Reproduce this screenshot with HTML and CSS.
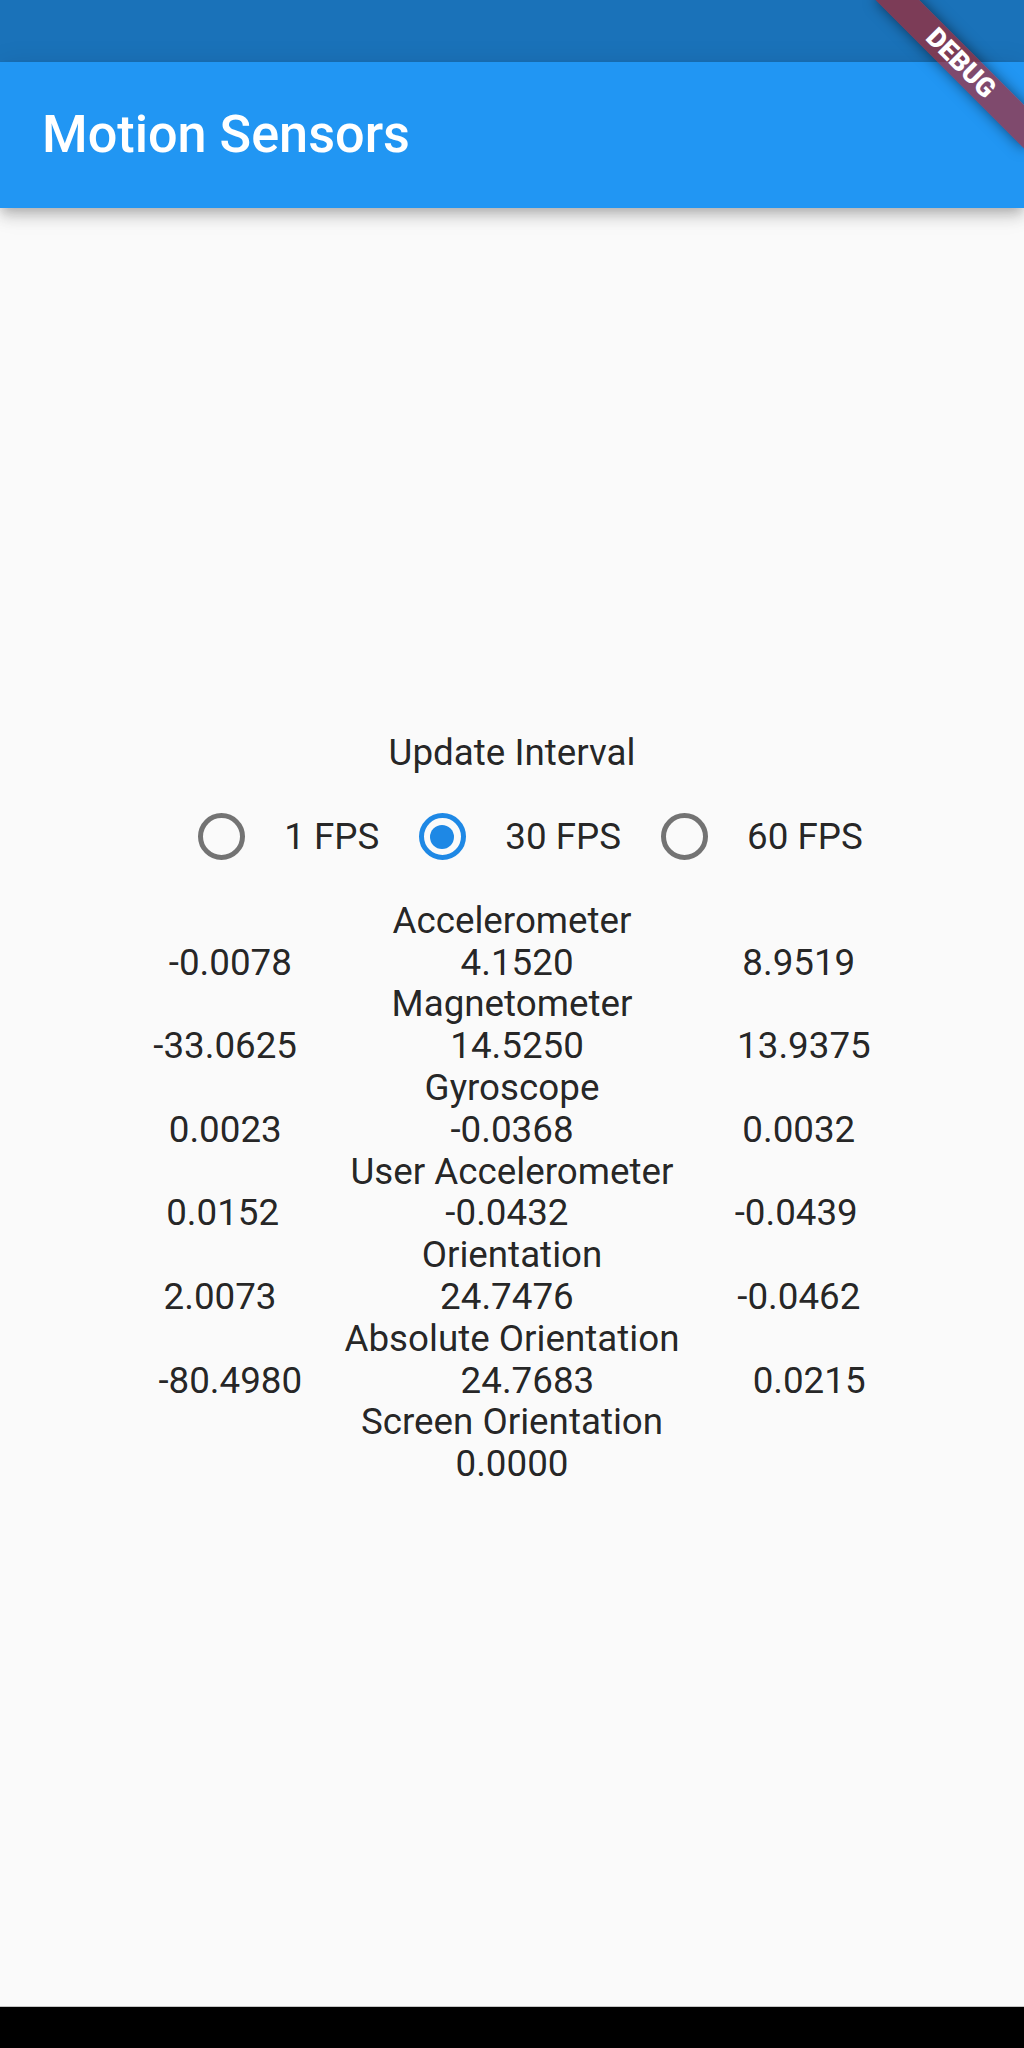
FILE: index.html
```html
<!DOCTYPE html>
<html lang="en">
<head>
<meta charset="utf-8">
<title>Motion Sensors</title>
<link rel="stylesheet" href="styles.css">
</head>
<body>
<div class="screen">
  <div class="status-bar"></div>
  <header class="app-bar">
    <h1 class="app-title">Motion Sensors</h1>
  </header>
  <main class="content">
    <div class="line center">Update Interval</div>
    <div class="radio-row">
      <span class="radio"><span class="radio-circle"></span></span>
      <span class="radio-label">1 FPS</span>
      <span class="radio"><span class="radio-circle checked"><span class="radio-dot"></span></span></span>
      <span class="radio-label">30 FPS</span>
      <span class="radio"><span class="radio-circle"></span></span>
      <span class="radio-label">60 FPS</span>
    </div>
    <div class="line center">Accelerometer</div>
    <div class="line values"><span>-0.0078</span><span>4.1520</span><span>8.9519</span></div>
    <div class="line center">Magnetometer</div>
    <div class="line values"><span>-33.0625</span><span>14.5250</span><span>13.9375</span></div>
    <div class="line center">Gyroscope</div>
    <div class="line values"><span>0.0023</span><span>-0.0368</span><span>0.0032</span></div>
    <div class="line center">User Accelerometer</div>
    <div class="line values"><span>0.0152</span><span>-0.0432</span><span>-0.0439</span></div>
    <div class="line center">Orientation</div>
    <div class="line values"><span>2.0073</span><span>24.7476</span><span>-0.0462</span></div>
    <div class="line center">Absolute Orientation</div>
    <div class="line values"><span>-80.4980</span><span>24.7683</span><span>0.0215</span></div>
    <div class="line center">Screen Orientation</div>
    <div class="line center">0.0000</div>
  </main>
  <div class="nav-bar"></div>
  <div class="debug-banner"><div class="debug-ribbon">DEBUG</div></div>
</div>
</body>
</html>
```

FILE: styles.css
```css
html, body {
  margin: 0;
  padding: 0;
  background: #fafafa;
}

.screen {
  position: relative;
  width: 1024px;
  height: 2048px;
  display: flex;
  flex-direction: column;
  overflow: hidden;
  font-family: Roboto, "Liberation Sans", sans-serif;
  background: #fafafa;
}

.status-bar {
  height: 62px;
  flex: none;
  background: #1a72b9;
}

.app-bar {
  position: relative;
  z-index: 1;
  height: 146px;
  flex: none;
  display: flex;
  align-items: center;
  padding-left: 42px;
  background: #2196f3;
  box-shadow: 0 5px 10px -3px rgba(0, 0, 0, 0.18), 0 10px 13px 0 rgba(0, 0, 0, 0.12), 0 3px 26px 0 rgba(0, 0, 0, 0.1);
}

.app-title {
  margin: 0;
  font-size: 52.2px;
  font-weight: 500;
  color: #ffffff;
  line-height: 1;
}

.content {
  flex: 1;
  display: flex;
  flex-direction: column;
  justify-content: center;
  padding-top: 3px;
  color: rgba(0, 0, 0, 0.87);
  font-size: 36.75px;
}

.line {
  height: 41.8px;
  line-height: 41.8px;
  white-space: nowrap;
}

.center {
  text-align: center;
}

.values {
  display: flex;
  justify-content: space-evenly;
}

.radio-row {
  height: 126px;
  display: flex;
  align-items: center;
  justify-content: center;
  line-height: 41.8px;
  padding-right: 3px;
}

.radio {
  width: 126px;
  height: 126px;
  display: flex;
  align-items: center;
  justify-content: center;
}

.radio-circle {
  box-sizing: border-box;
  width: 47px;
  height: 47px;
  border-radius: 50%;
  border: 5.25px solid rgba(0, 0, 0, 0.54);
  display: flex;
  align-items: center;
  justify-content: center;
}

.radio-circle.checked {
  border-color: #1e88e5;
}

.radio-dot {
  width: 24px;
  height: 24px;
  border-radius: 50%;
  background: #1e88e5;
}

.nav-bar {
  height: 41px;
  flex: none;
  background: #000000;
  border-top: 1px solid #c4c4c4;
}

.debug-banner {
  position: absolute;
  left: 1024px;
  top: 0;
  width: 0;
  height: 0;
  z-index: 5;
  transform-origin: 0 0;
  transform: rotate(45deg);
}

.debug-ribbon {
  position: absolute;
  left: -105px;
  top: 73.5px;
  width: 210px;
  height: 31.5px;
  display: flex;
  align-items: center;
  justify-content: center;
  background: rgba(183, 28, 28, 0.627);
  box-shadow: 0 0 14px rgba(0, 0, 0, 0.5);
  color: #ffffff;
  font-family: Roboto, "Liberation Sans", sans-serif;
  font-size: 26.8px;
  font-weight: 900;
  line-height: 1;
}
```
